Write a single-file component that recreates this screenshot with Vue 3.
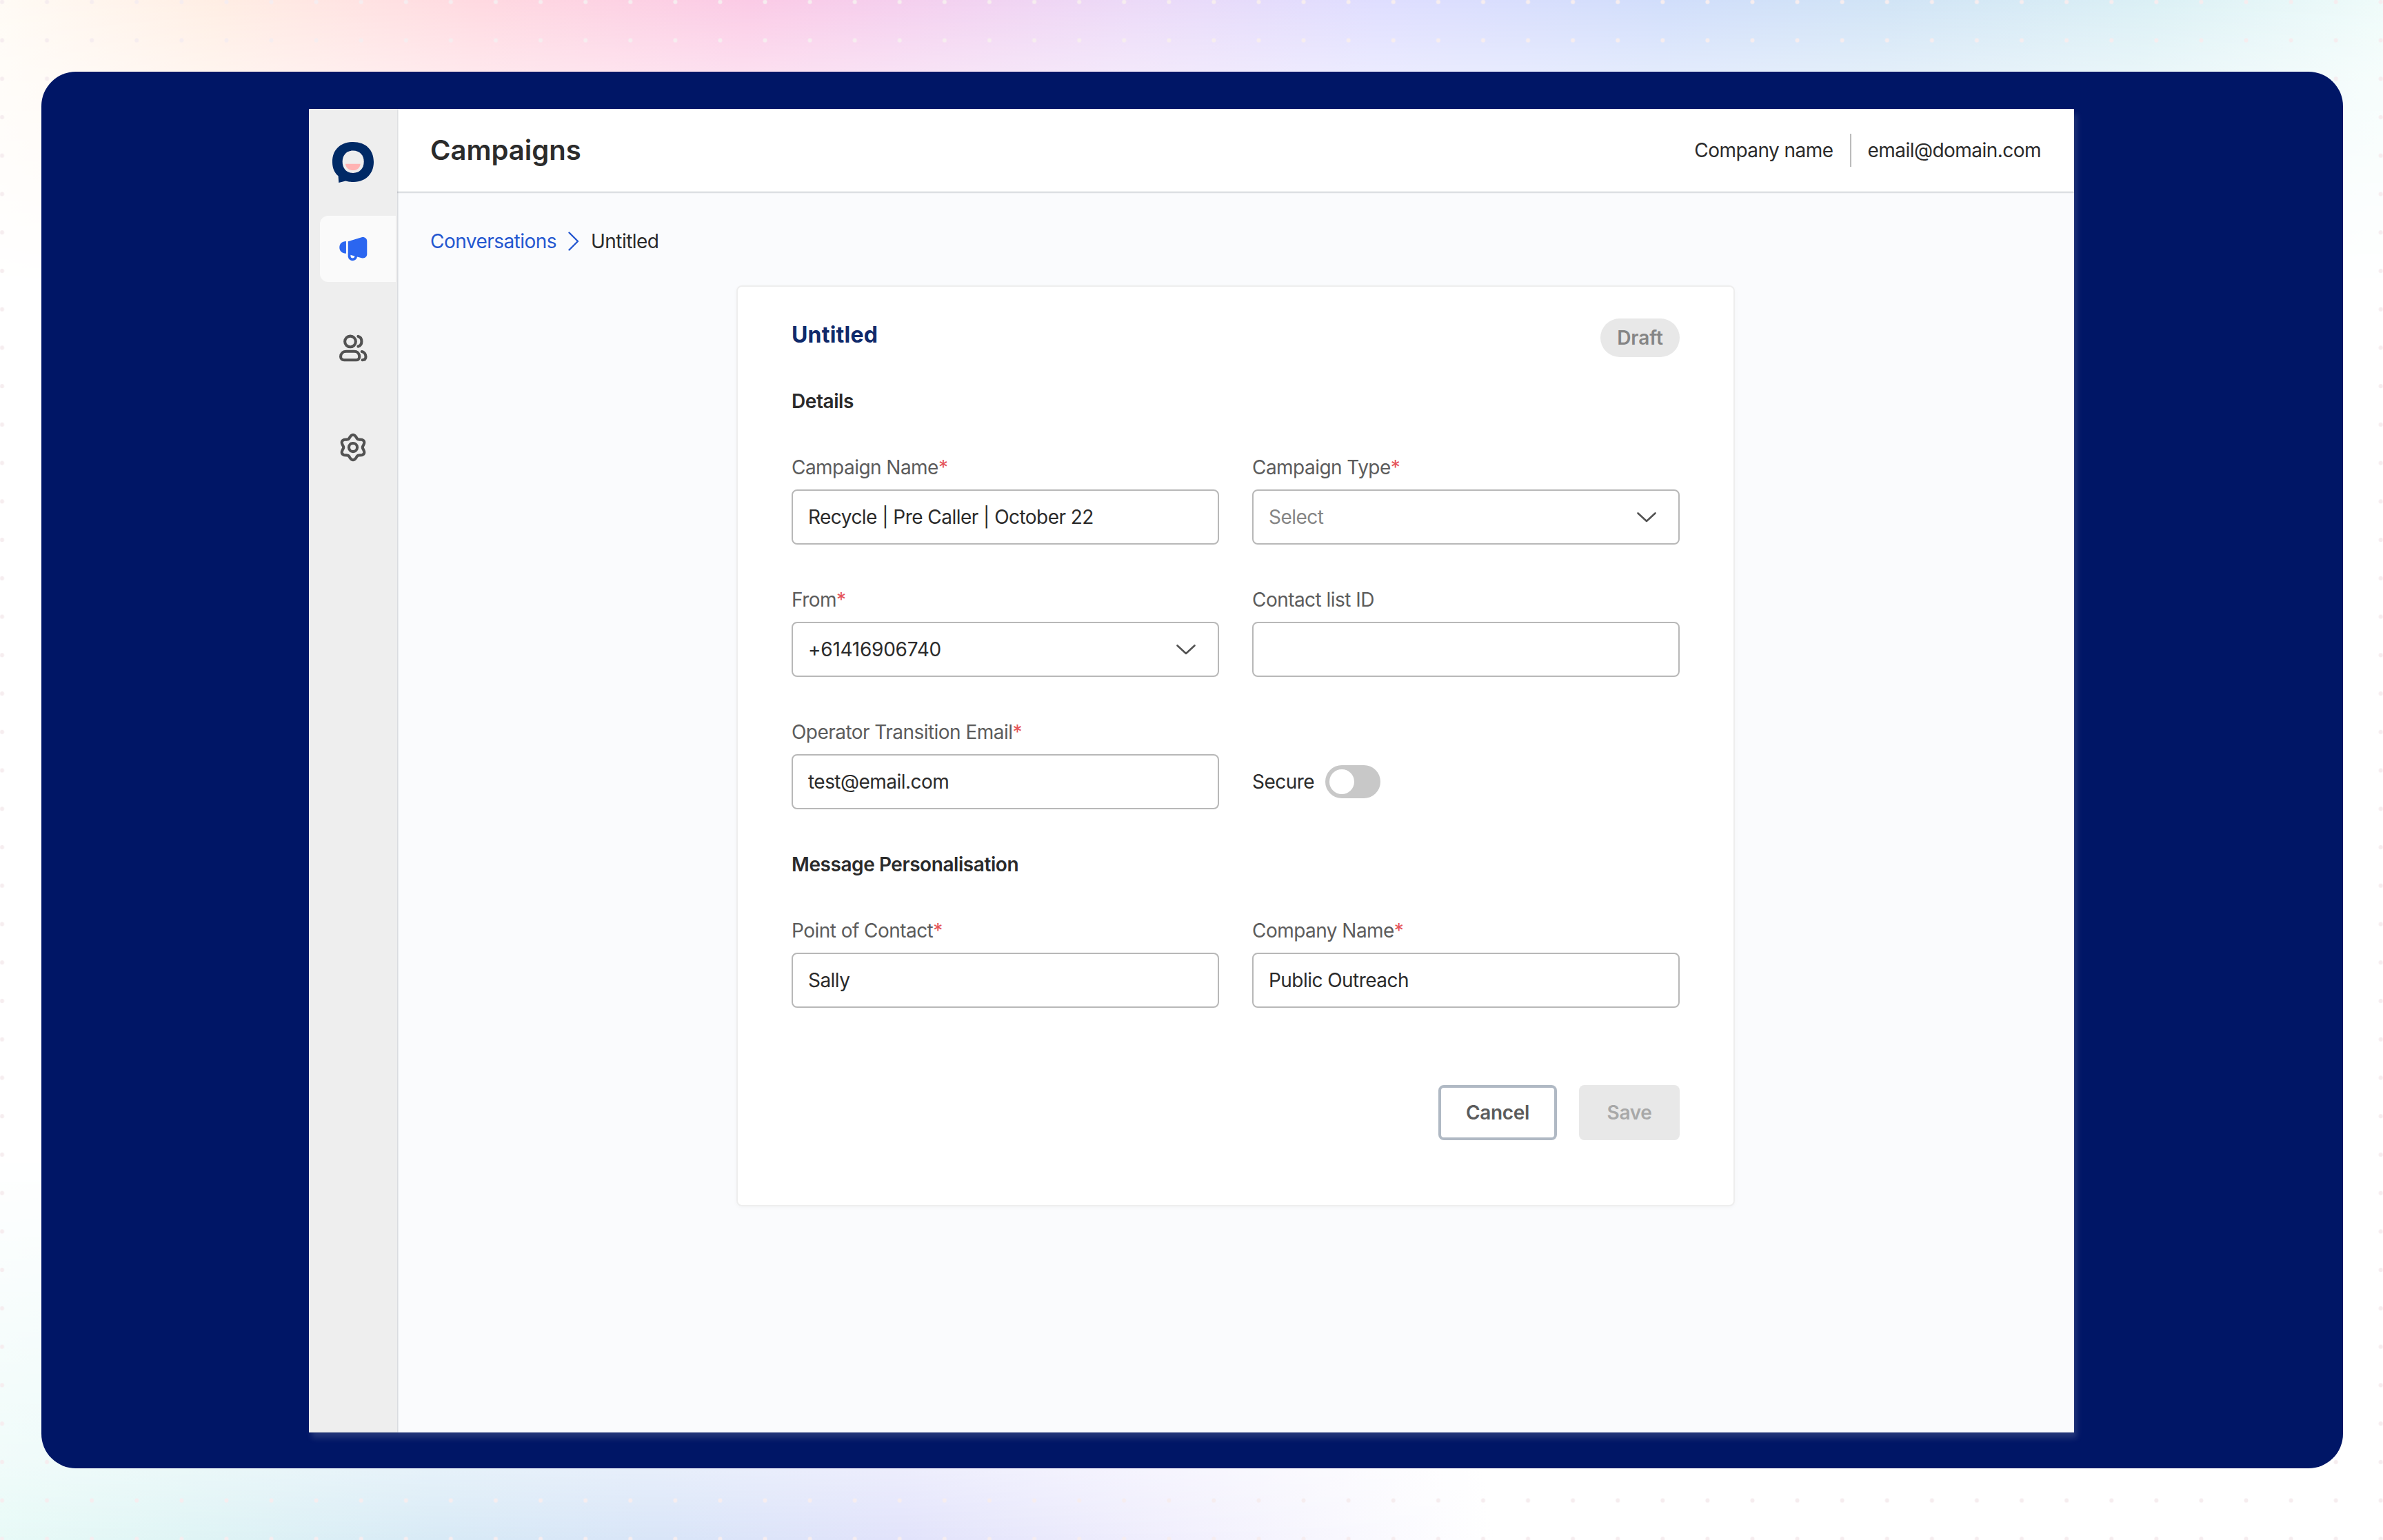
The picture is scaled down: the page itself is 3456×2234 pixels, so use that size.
<template>
    <div class="page">
        <div class="glow glow-top"></div>
        <div class="glow glow-bottom"></div>
        <svg class="dots" width="3456" height="2234" aria-hidden="true">
            <defs>
                <pattern id="dot-grid" width="65.09" height="55.74" x="-30" y="-25.2" patternUnits="userSpaceOnUse">
                    <circle cx="33" cy="28" r="3" fill="#f6edef" />
                </pattern>
            </defs>
            <rect width="3456" height="2234" fill="url(#dot-grid)" />
        </svg>

        <div class="stage">
            <div class="window">
                <nav class="sidebar">
                    <svg class="logo" viewBox="146 185 168 165">
                        <path fill="#002a66"
                            d="M230 185C282 185 314 217 314 266C314 315 280 347 232 347C220 347 210 346 200 343L172 350L170 323C154 309 146 290 146 266C146 217 178 185 230 185Z" />
                        <path fill="#eeeeee"
                            d="M230 220C257 220 274 238 274 265C274 292 257 311 230 311C203 311 187 292 187 265C187 238 203 220 230 220Z" />
                        <path fill="#ffb3b3" d="M199 274H260C258 291 246 300 230 300C213 300 201 291 199 274Z" />
                    </svg>

                    <a class="nav-item active">
                        <svg class="nav-icon" viewBox="162 551.8 134.4 134.4">
                            <path fill="currentColor" d="M201 588C184 588 174 598 174 613C174 628 184 638 201 638Z" />
                            <path fill="currentColor"
                                d="M209 589L264 572C276 569 286 577 286 588V640C286 652 276 659 264 656L209 641Z" />
                            <path fill="none" stroke="currentColor" stroke-width="10.5"
                                d="M214 638L214 650A13.6 13.6 0 0 0 241 650L242 647" />
                        </svg>
                    </a>
                    <a class="nav-item">
                        <svg class="nav-icon line" viewBox="162 954.6 134.4 134.4">
                            <circle cx="218" cy="995" r="22" />
                            <path d="M202 1035H234C247 1035 255 1044 255 1057C255 1065 250 1070 242 1070H193C185 1070 179 1065 179 1057C179 1044 188 1035 202 1035Z" />
                            <path d="M250 974C259 976 264 985 264 995S259 1012 250 1015" />
                            <path d="M265 1036C275 1038 281 1047 281 1057C281 1065 276 1070 267 1070" />
                        </svg>
                    </a>
                    <a class="nav-item">
                        <svg class="nav-icon line" viewBox="-67.2 -67.2 134.4 134.4">
                            <path :d="gear" />
                            <circle r="17" />
                        </svg>
                    </a>
                </nav>

                <div class="main">
                    <header class="topbar">
                        <h1>Campaigns</h1>
                        <div class="account">
                            <span>Company name</span>
                            <i class="divider"></i>
                            <span>email@domain.com</span>
                        </div>
                    </header>

                    <main class="content">
                        <div class="breadcrumb">
                            <a>Conversations</a>
                            <svg width="16" height="28" viewBox="0 0 16 28">
                                <path d="M1.5 1.5L14 14L1.5 26.5" />
                            </svg>
                            <span>Untitled</span>
                        </div>

                        <section class="card">
                            <div class="card-head">
                                <h2>Untitled</h2>
                                <span class="badge">Draft</span>
                            </div>

                            <template v-for="section in sections" :key="section.title">
                                <h3>{{ section.title }}</h3>
                                <div class="fields">
                                    <div v-for="field in section.fields" :key="field.label" class="field">
                                        <label>{{ field.label }}<em v-if="field.required">*</em></label>
                                        <div class="control">
                                            <span :class="{ placeholder: field.placeholder, phone: field.phone }">{{ field.placeholder || field.value }}</span>
                                            <svg v-if="field.select" width="32" height="32" viewBox="0 0 32 32">
                                                <path d="M3.5 10.5L16 22L28.5 10.5" />
                                            </svg>
                                        </div>
                                    </div>
                                    <div v-if="section.toggle" class="secure">
                                        <span>{{ section.toggle }}</span>
                                        <button class="switch" :class="{ on: secure }" @click="secure = !secure"></button>
                                    </div>
                                </div>
                            </template>

                            <div class="actions">
                                <button class="btn cancel">Cancel</button>
                                <button class="btn save" disabled>Save</button>
                            </div>
                        </section>
                    </main>
                </div>
            </div>
        </div>
    </div>
</template>

<script setup>
import { ref } from 'vue'

const secure = ref(false)

const sections = [
    {
        title: 'Details',
        toggle: 'Secure',
        fields: [
            { label: 'Campaign Name', required: true, value: 'Recycle | Pre Caller | October 22' },
            { label: 'Campaign Type', required: true, placeholder: 'Select', select: true },
            { label: 'From', required: true, value: '+61416906740', select: true, phone: true },
            { label: 'Contact list ID', value: '' },
            { label: 'Operator Transition Email', required: true, value: 'test@email.com' },
        ],
    },
    {
        title: 'Message Personalisation',
        fields: [
            { label: 'Point of Contact', required: true, value: 'Sally' },
            { label: 'Company Name', required: true, value: 'Public Outreach' },
        ],
    },
]

// six-lobed gear outline, first lobe pointing up
const gear = 'M' + Array.from({ length: 120 }, (_, i) => {
    const a = (i / 120) * Math.PI * 2
    const r = 44.8 + 6.2 * Math.cos(6 * a)
    return `${(r * Math.sin(a)).toFixed(2)} ${(-r * Math.cos(a)).toFixed(2)}`
}).join('L') + 'Z'
</script>

<style>
body {
    background: #fff;
}
</style>

<style scoped>
* {
    box-sizing: border-box;
}

.page {
    position: relative;
    width: 3456px;
    height: 2234px;
    padding: 104px 58px 104px 60px;
    overflow: hidden;
    background: #fff;
    color: #2b2b2b;
    font-family: Inter, "Liberation Sans", sans-serif;
    font-size: 28px;
    line-height: 40px;
    letter-spacing: -.54px;
}

.glow {
    position: absolute;
    left: 0;
    width: 100%;
}

.glow-top {
    top: 0;
    height: 420px;
    background: linear-gradient(97deg, #fffbf5 0%, #ffeee4 9%, #ffd9e1 20%, #fbcbe6 31%, #f5cfee 37%, #ecdaf8 47%, #dfdeff 57%, #d1defb 69%, #d1e4f6 78%, #dbf0f5 89%, #f0fcfa 99%);
    -webkit-mask-image: linear-gradient(to bottom, #000 0%, rgba(0, 0, 0, .6) 26%, transparent 100%);
    mask-image: linear-gradient(to bottom, #000 0%, rgba(0, 0, 0, .6) 26%, transparent 100%);
}

.glow-bottom {
    bottom: 0;
    height: 560px;
    background: linear-gradient(80deg, #e8faf7 0%, #dff4f5 8%, #d8eaf6 18%, #d9e5f8 27%, #e2e3fb 37%, #f1effd 48%, #fff 61%);
    -webkit-mask-image: linear-gradient(to top, #000 0%, rgba(0, 0, 0, .62) 20%, transparent 100%);
    mask-image: linear-gradient(to top, #000 0%, rgba(0, 0, 0, .62) 20%, transparent 100%);
}

.dots {
    position: absolute;
    left: 0;
    top: 0;
}

.stage {
    position: relative;
    display: flex;
    justify-content: center;
    width: 3338px;
    height: 2026px;
    padding: 54px 390px 52px 388px;
    border-radius: 50px;
    background: #001666;
}

.window {
    display: flex;
    width: 2560px;
    height: 1920px;
    background: #fafbfd;
    box-shadow: 4px 8px 8px rgba(208, 213, 221, .17);
}

.sidebar {
    position: relative;
    z-index: 1;
    display: flex;
    flex-direction: column;
    align-items: flex-end;
    flex: none;
    width: 128px;
    padding: 48px 2px 0 0;
    background: #eee;
    box-shadow: 1px 0 2px rgba(16, 24, 40, .2);
}

.logo {
    width: 60px;
    height: 59px;
    margin: 0 32px 48px 0;
}

.nav-item {
    display: flex;
    justify-content: center;
    align-items: center;
    width: 110px;
    height: 96px;
    margin-bottom: 48px;
    padding-right: 14px;
    border-radius: 12px 0 0 12px;
    color: #525252;
}

.nav-item.active {
    background: #fafafa;
    color: #2b66f0;
}

.nav-icon {
    width: 48px;
    height: 48px;
}

.nav-icon.line {
    fill: none;
    stroke: currentColor;
    stroke-width: 11.5;
    stroke-linecap: round;
    stroke-linejoin: round;
}

.main {
    flex: 1;
    min-width: 0;
}

.topbar {
    display: flex;
    justify-content: space-between;
    align-items: center;
    height: 120px;
    padding: 0 48px;
    background: #fff;
    box-shadow: 0 1px 1px rgba(16, 24, 40, .2), 0 2px 2px rgba(16, 24, 40, .08);
}

h1,
h2,
h3 {
    margin: 0;
    font-weight: 600;
}

h1 {
    font-size: 40px;
    line-height: 60px;
    letter-spacing: 0;
}

.account {
    display: flex;
    align-items: center;
    gap: 24px;
}

.divider {
    width: 2px;
    height: 48px;
    background: #bbb;
}

.content {
    padding: 52px 48px 0;
}

.breadcrumb {
    display: flex;
    align-items: center;
    gap: 17px;
    height: 40px;
}

.breadcrumb a {
    color: #2457d0;
}

.breadcrumb svg {
    fill: none;
    stroke: #2457d0;
    stroke-width: 2.4;
    stroke-linecap: round;
    stroke-linejoin: round;
}

.card {
    width: 1448px;
    height: 1336px;
    margin: 44px auto 0;
    padding: 46px 78px;
    border: 2px solid #eee;
    border-radius: 8px;
    background: #fff;
    box-shadow: 0 2px 6px rgba(16, 24, 40, .03);
}

.card-head {
    display: flex;
    justify-content: space-between;
    align-items: flex-start;
    height: 56px;
    margin-bottom: 44px;
}

h2 {
    color: #102a6b;
    font-size: 32px;
    font-weight: 700;
    line-height: 48px;
    letter-spacing: .2px;
}

h3 {
    font-size: 28px;
    line-height: 40px;
    letter-spacing: -.43px;
}

.badge {
    height: 56px;
    padding: 0 24px;
    border-radius: 28px;
    background: #e8e8e8;
    color: #858585;
    font-weight: 600;
    line-height: 56px;
    letter-spacing: 0;
}

.fields {
    display: grid;
    grid-template-columns: 620px 620px;
    gap: 60px 48px;
    margin-top: 56px;
}

.fields + h3 {
    margin-top: 60px;
}

label {
    display: block;
    margin-bottom: 12px;
    color: #5c5c5c;
}

label em {
    color: #e5555a;
    font-style: normal;
}

.control {
    display: flex;
    justify-content: space-between;
    align-items: center;
    height: 80px;
    padding: 0 30px 0 22px;
    border: 2px solid #b8b8b8;
    border-radius: 8px;
    background: #fff;
}

.control svg {
    fill: none;
    stroke: #525252;
    stroke-width: 2.6;
    stroke-linecap: round;
    stroke-linejoin: round;
}

.placeholder {
    color: #858585;
}

.phone {
    letter-spacing: -.25px;
}

.secure {
    display: flex;
    align-items: center;
    align-self: end;
    gap: 16px;
    height: 80px;
}

.switch {
    width: 80px;
    height: 48px;
    padding: 6px;
    border: 0;
    border-radius: 24px;
    background: #c8c8c8;
}

.switch::before {
    content: "";
    display: block;
    width: 36px;
    height: 36px;
    border-radius: 50%;
    background: #fff;
}

.switch.on::before {
    margin-left: auto;
}

.actions {
    display: flex;
    justify-content: flex-end;
    gap: 32px;
    margin-top: 112px;
}

.btn {
    height: 80px;
    padding: 0;
    border: 0;
    border-radius: 8px;
    font-family: inherit;
    font-size: 28px;
    font-weight: 600;
    letter-spacing: -.35px;
}

.cancel {
    width: 172px;
    border: 4px solid #b0b9c4;
    background: #fff;
    color: #5c5c5c;
}

.save {
    width: 146px;
    background: #e8e8e8;
    color: #a8a8a8;
}
</style>
